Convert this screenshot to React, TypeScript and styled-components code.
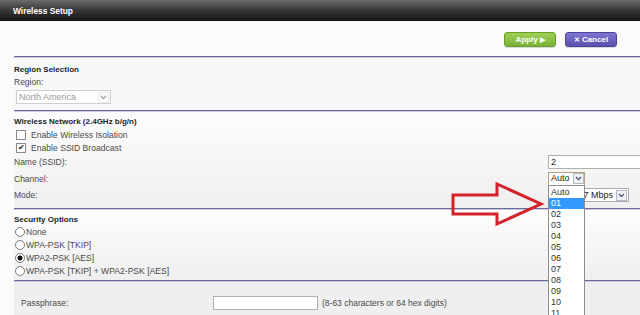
import React from "react";
import styled, {createGlobalStyle} from "styled-components";

const GlobalStyle = createGlobalStyle`
  html, body {
    margin: 0;
    padding: 0;
    background: #fafafa;
  }
  * {
    box-sizing: border-box;
  }
`;

const channels = ["Auto", "01", "02", "03", "04", "05", "06", "07", "08", "09", "10", "11"];

const Chevron = () => (
  <svg width="7" height="5" viewBox="0 0 7 5">
    <polyline points="1,1 3.5,3.5 6,1" fill="none" stroke="#4a5a78" strokeWidth="1.3" />
  </svg>
);

const App = (): JSX.Element => {
  return (
    <Page>
      <GlobalStyle />
      <Header>Wireless Setup</Header>
      <Toolbar>
        <ActionButton variant="apply">Apply <Glyph>▶</Glyph></ActionButton>
        <ActionButton variant="cancel"><Glyph>✕</Glyph>Cancel</ActionButton>
      </Toolbar>
      <Content>
        <Section tone="light" pt={6} pb={6}>
          <Title>Region Selection</Title>
          <Label>Region:</Label>
          <Select disabled width={95}>
            <SelectText>North America</SelectText>
            <ArrowBox disabled><Chevron /></ArrowBox>
          </Select>
        </Section>

        <Section tone="fade" pt={4} pb={4}>
          <Title>Wireless Network (2.4GHz b/g/n)</Title>
          <CheckRow>
            <CheckBox />
            <span>Enable Wireless Isolation</span>
          </CheckRow>
          <CheckRow>
            <CheckBox checked>✔</CheckBox>
            <span>Enable SSID Broadcast</span>
          </CheckRow>
          <FormRow>
            <Label>Name (SSID):</Label>
            <TextInput>2</TextInput>
          </FormRow>
          <FormRow>
            <Label>Channel:</Label>
            <Select focused width={37}>
              <SelectText>Auto</SelectText>
              <ArrowBox><Chevron /></ArrowBox>
            </Select>
          </FormRow>
          <FormRow>
            <Label>Mode:</Label>
            <Select width={81} alignEnd>
              <SelectText>Up to 217 Mbps</SelectText>
              <ArrowBox><Chevron /></ArrowBox>
            </Select>
          </FormRow>
        </Section>

        <Section tone="fade" pt={4} pb={2}>
          <Title>Security Options</Title>
          <RadioRow>
            <Radio />
            <span>None</span>
          </RadioRow>
          <RadioRow>
            <Radio />
            <span>WPA-PSK [TKIP]</span>
          </RadioRow>
          <RadioRow>
            <Radio checked />
            <span>WPA2-PSK [AES]</span>
          </RadioRow>
          <RadioRow>
            <Radio />
            <span>WPA-PSK [TKIP] + WPA2-PSK [AES]</span>
          </RadioRow>
        </Section>

        <Section tone="grey" pt={14} pb={6}>
          <PassRow>
            <Label>Passphrase:</Label>
            <TextInput width={105} />
            <Hint>(8-63 characters or 64 hex digits)</Hint>
          </PassRow>
        </Section>
      </Content>

      <ChannelList>
        {channels.map((c, i) => (
          <ChannelItem key={c} selected={i === 1}>{c}</ChannelItem>
        ))}
      </ChannelList>

      <Pointer width="96" height="50" viewBox="0 0 96 50">
        <polygon
          points="3,14 47,14 47,3 91,23 47,43 47,33 3,33"
          fill="none"
          stroke="#d3222a"
          strokeWidth="3"
          strokeLinejoin="miter"
        />
      </Pointer>
    </Page>
  );
};

const Page = styled.div`
  position: relative;
  width: 640px;
  height: 315px;
  overflow: hidden;
  background: #fbfbfb;
  font-family: "Liberation Sans", Arial, sans-serif;
  font-size: 8.5px;
  color: #4a4a4a;
`;

const Header = styled.div`
  height: 21px;
  padding-left: 13px;
  display: flex;
  align-items: center;
  background: linear-gradient(#6c6c6c, #3a3a3a 45%, #151515);
  color: #ffffff;
  font-weight: bold;
  font-size: 8.4px;
`;

const Toolbar = styled.div`
  height: 35px;
  display: flex;
  justify-content: flex-end;
  align-items: center;
  gap: 9px;
  padding: 2px 23px 0 0;
`;

interface ButtonProps {
  variant: "apply" | "cancel";
}

const ActionButton = styled.div<ButtonProps>`
  width: 52px;
  height: 15px;
  border-radius: 3px;
  display: flex;
  align-items: center;
  justify-content: center;
  gap: 2px;
  color: #ffffff;
  font-weight: bold;
  font-size: 8px;
  border: 1px solid ${({variant}) => variant === "apply" ? "#6a9e2c" : "#4b4398"};
  background: ${({variant}) => variant === "apply"
    ? "linear-gradient(#9fd052, #79b23a)"
    : "linear-gradient(#7e76d0, #5a50ad)"};
  box-shadow: 0 1px 1px rgba(0, 0, 0, 0.15);
`;

const Glyph = styled.span`
  font-size: 7px;
  line-height: 7px;
`;

const Content = styled.div`
  margin-left: 14px;
`;

interface SectionProps {
  tone: "light" | "fade" | "grey";
  pt: number;
  pb: number;
}

const Section = styled.div<SectionProps>`
  border-top: 1px solid #6a6a9c;
  box-shadow: inset 0 1px 0 #c9c9dc;
  padding: ${({pt, pb}) => `${pt + 1}px 0 ${pb}px 0`};
  background: ${({tone}) => tone === "light"
    ? "#f8f8f8"
    : tone === "fade"
      ? "linear-gradient(#fdfdfd, #efefef)"
      : "#efefef"};
`;

const Title = styled.div`
  font-weight: bold;
  font-size: 8px;
  color: #1e1e1e;
  line-height: 12px;
`;

const Label = styled.div`
  line-height: 12px;
  color: #4a4a4a;
`;

interface SelectProps {
  width: number;
  disabled?: boolean;
  focused?: boolean;
  alignEnd?: boolean;
}

const Select = styled.div<SelectProps>`
  width: ${({width}) => width}px;
  height: 14px;
  margin: ${({disabled}) => disabled ? "2px 0 0 2px" : "0"};
  display: flex;
  align-items: center;
  justify-content: ${({alignEnd}) => alignEnd ? "flex-end" : "space-between"};
  gap: 3px;
  padding: 1px 1px 1px 2px;
  background: #ffffff;
  border: 1px solid ${({disabled, focused}) => disabled ? "#cfcfcf" : focused ? "#b3a581" : "#a5acb5"};
  color: ${({disabled}) => disabled ? "#9a9a9a" : "#222222"};
  font-size: 9px;
  white-space: nowrap;
  overflow: hidden;
`;

const SelectText = styled.span`
  line-height: 11px;
`;

const ArrowBox = styled.span<{ disabled?: boolean }>`
  flex: 0 0 11px;
  height: 11px;
  display: flex;
  align-items: center;
  justify-content: center;
  border: 1px solid ${({disabled}) => disabled ? "#dadada" : "#b4b8c0"};
  background: ${({disabled}) => disabled ? "#f6f6f6" : "#eef0f3"};
  opacity: ${({disabled}) => disabled ? 0.55 : 1};
`;

const CheckRow = styled.label`
  height: 13px;
  display: flex;
  align-items: center;
  gap: 5px;
  padding-left: 2px;
  font-size: 8.6px;
`;

const CheckBox = styled.span<{ checked?: boolean }>`
  width: 10px;
  height: 10px;
  border: 1px solid #8a8a8a;
  background: #ffffff;
  display: flex;
  align-items: center;
  justify-content: center;
  font-size: 8px;
  color: #222222;
  line-height: 8px;
`;

const FormRow = styled.div`
  display: grid;
  grid-template-columns: 534px 1fr;
  align-items: center;
  height: 16.5px;
`;

const TextInput = styled.div<{ width?: number }>`
  height: 14px;
  width: ${({width}) => width ? `${width}px` : "auto"};
  background: #ffffff;
  border: 1px solid #b0b0b0;
  border-right: ${({width}) => width ? "1px solid #b0b0b0" : "none"};
  padding: 0 2px;
  font-size: 9px;
  color: #222222;
  line-height: 12px;
`;

const RadioRow = styled.label`
  height: 13px;
  display: flex;
  align-items: center;
  gap: 1px;
  padding-left: 1px;
  font-size: 8.6px;
`;

const Radio = styled.span<{ checked?: boolean }>`
  width: 10px;
  height: 10px;
  border-radius: 50%;
  border: 1px solid #7b7b7b;
  background: ${({checked}) => checked
    ? "radial-gradient(circle, #111 0 2.2px, #ffffff 2.8px)"
    : "#ffffff"};
`;

const PassRow = styled.div`
  display: grid;
  grid-template-columns: 188px 105px 1fr;
  align-items: center;
  column-gap: 4px;
  padding-left: 7px;
`;

const Hint = styled.span`
  color: #4a4a4a;
  white-space: nowrap;
`;

const ChannelList = styled.div`
  position: absolute;
  left: 548px;
  top: 185px;
  width: 37px;
  height: 140px;
  padding-top: 1px;
  background: #ffffff;
  border: 1px solid #8e8e8e;
`;

const ChannelItem = styled.div<{ selected?: boolean }>`
  height: 11px;
  line-height: 11px;
  padding-left: 2px;
  font-size: 9px;
  color: ${({selected}) => selected ? "#ffffff" : "#333333"};
  background: ${({selected}) => selected ? "#3399ff" : "transparent"};
`;

const Pointer = styled.svg`
  position: absolute;
  left: 450px;
  top: 181px;
`;

export default App;
